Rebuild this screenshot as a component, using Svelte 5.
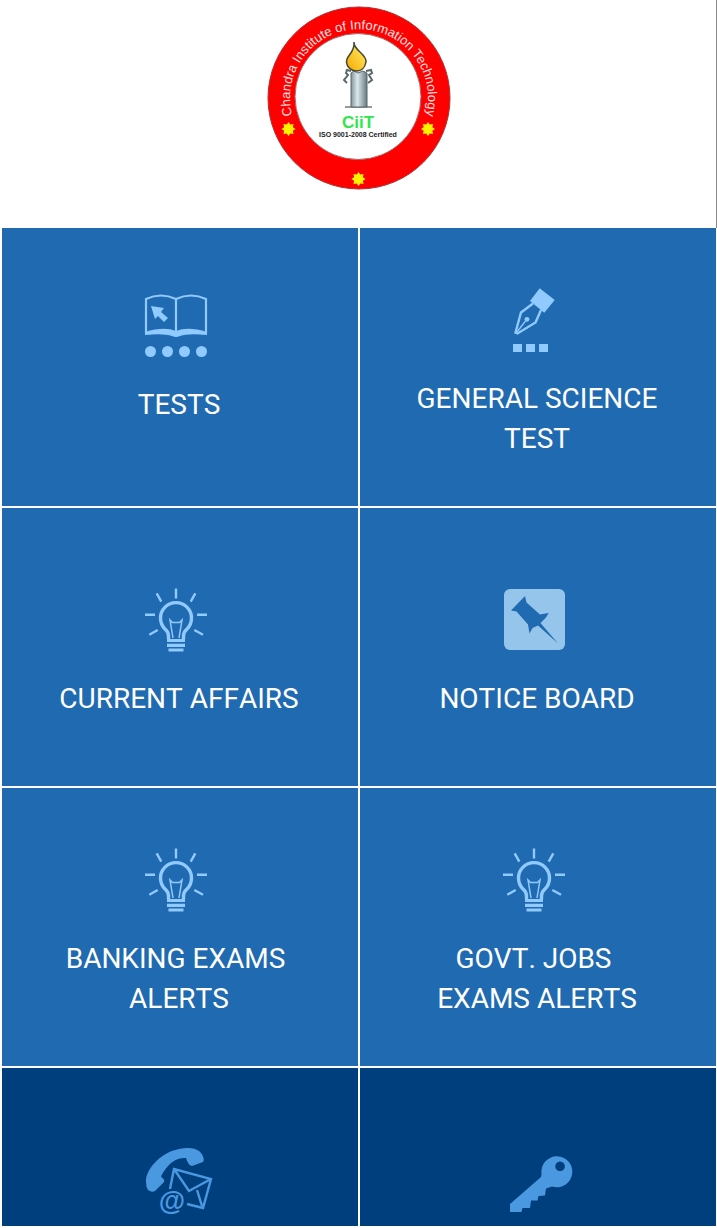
<script>
  const tiles = [
    { icon: "book", lines: ["TESTS"], raised: true },
    { icon: "pen", lines: ["GENERAL SCIENCE", "TEST"] },
    { icon: "bulb", lines: ["CURRENT AFFAIRS"] },
    { icon: "pin", lines: ["NOTICE BOARD"] },
    { icon: "bulb", lines: ["BANKING EXAMS\u00a0", "ALERTS"] },
    { icon: "bulb", lines: ["GOVT. JOBS\u00a0", "EXAMS ALERTS"] },
    { icon: "contact", label: "Contact", lines: [], dark: true },
    { icon: "key", label: "Login", lines: [], dark: true }
  ];

  const star =
    "M0-7 1.8-4.4 5-5 4.4-1.8 7 0 4.4 1.8 5 5 1.8 4.4 0 7-1.8 4.4-5 5-4.4 1.8-7 0-4.4-1.8-5-5-1.8-4.4Z";
</script>

<div class="page">
  <header class="header">
    <svg class="logo" viewBox="0 0 184 184" role="img" aria-label="CiiT">
      <defs>
        <path id="ring" d="M34.4 131.6A69 69 0 1 1 147.6 131.6" />
        <linearGradient id="wax">
          <stop offset="0" stop-color="#82949b" />
          <stop offset="0.4" stop-color="#dbe9ec" />
          <stop offset="1" stop-color="#687980" />
        </linearGradient>
        <linearGradient id="flame" x1="1" y1="0" x2="0" y2="1">
          <stop offset="0" stop-color="#fff36b" />
          <stop offset="1" stop-color="#f5a900" />
        </linearGradient>
      </defs>
      <circle cx="91" cy="92" r="91" fill="#fe0000" stroke="#a33" />
      <circle cx="90" cy="90.5" r="63" fill="#fff" stroke="#a66" />
      <text class="ring-text"><textPath href="#ring" startOffset="50%">Chandra Institute of Information Technology</textPath></text>
      <g fill="#fff200">
        <path d={star} transform="translate(20.5 123)" />
        <path d={star} transform="translate(160 123)" />
        <path d={star} transform="translate(90.5 173)" />
      </g>
      <path d="M77 101h27" stroke="#777" stroke-width="1.5" />
      <path d="M83 67v34h16V67l-4-2-5 2-4-2Z" fill="url(#wax)" stroke="#59676d" />
      <path d="M83 65l-4-1-1 3 2 2-4 5 3 3M98 65l5-1 1 3-3 2 3 5-4 3" fill="none" stroke="#59676d" stroke-width="2" />
      <path d="M86 36c-1 8 13 12 12 20-1 6-5 9-9 9-7 0-12-6-10-12 2-5 8-8 7-17Z" fill="url(#flame)" stroke="#464632" stroke-width="1.5" />
      <text class="brand" x="90" y="122">CiiT</text>
      <text class="iso" x="90" y="131">ISO 9001-2008 Certified</text>
    </svg>
  </header>

  <nav class="grid">
    {#each tiles as tile}
      <a
        class="tile"
        class:raised={tile.raised}
        class:dark={tile.dark}
        href="#{tile.icon}"
        aria-label={tile.label}
      >
        <svg class="icon" viewBox="0 0 64 64" aria-hidden="true">
          {#if tile.icon === "book"}
            <path d="M2 39V5Q17-2 32 5Q47-2 62 5V39M32 5V39" fill="none" stroke="currentColor" stroke-width="2.2" />
            <path d="M1 38Q20 32 32 37Q44 32 63 38V41Q44 39 36 42Q32 44 28 42Q20 39 1 41Z" />
            <path d="M7 12L20 14 17 18 24 24 20 28 14 22 11 25Z" />
            <circle cx="6.5" cy="57.5" r="5.5" />
            <circle cx="23.5" cy="57.5" r="5.5" />
            <circle cx="40.5" cy="57.5" r="5.5" />
            <circle cx="57.5" cy="57.5" r="5.5" />
          {:else if tile.icon === "pen"}
            <path d="M37.7 0.3L52.7 12 42.3 24.7 28 13Z" />
            <path d="M31 15.5L19 24.5 13.5 44.5 15.5 45.5 33.5 34.5 39 22" fill="none" stroke="currentColor" stroke-width="2.4" />
            <path d="M15 44L25 31" stroke="currentColor" stroke-width="1.3" />
            <circle cx="25" cy="31.3" r="2.4" />
            <path d="M11 56h9v8h-9zM24 56h9v8h-9zM37 56h9v8h-9z" />
          {:else if tile.icon === "bulb"}
            <g fill="none" stroke="currentColor" stroke-width="2.4">
              <path d="M32 0.5V10.5M12.7 5.3L17.3 13.7M51.3 5.3L46.7 13.7M1 26.7H11M53 26.7H63M5.3 46.7L13.7 42M50.3 42L59 46.7" />
              <path d="M24.5 51V48Q24.5 44 21 41A15.5 15.5 0 1 1 43 41Q39.5 44 39.5 48V51" stroke-width="3.4" />
              <path d="M29 50L26 32 28.5 34.5H35.5L38 32 35 50" stroke-width="1.5" />
              <path d="M23 52.5H41M23 57.3H41M24.5 62H39.5" stroke-width="3.2" />
            </g>
          {:else if tile.icon === "pin"}
            <rect class="board" x="2" y="1" width="61" height="61" rx="6" />
            <path
              class="pin"
              d="M23 8L24.5 14.5 38 26.5 46.7 25 44 29.5 38.5 35 56 55.5 36 37.5 30.5 40 27.5 45.5 26 36.5 14.5 23.5 9 22.5Z"
            />
          {:else if tile.icon === "contact"}
            <path
              d="M2 34C1 23 15 5 35 1Q48-2 55 3C59 6 61 12 59 14L48 18Q44 17 42 10Q32 9 24 18Q18 25 17 29Q21 31 20 34L11 43Q8 45 4 42Q2 39 2 34Z"
            />
            <path d="M26 41L30 21 67 31 59 60 43 56M30 21L45 43 67 31M53 42L58 58" fill="none" stroke="currentColor" stroke-width="2.4" />
            <text class="at" x="28" y="62">@</text>
          {:else}
            <path
              fill-rule="evenodd"
              d="M39.5 26A15.5 15.5 0 1 1 50 38.5L44 40.5 43 47.5 36.5 48 35.5 52.5 29 52.5 28 60 20.5 60 19.5 64H8V56L39 29ZM58 13.5a4.8 4.8 0 1 0 .1 0Z"
            />
          {/if}
        </svg>
        {#if tile.lines.length}
          <span class="label">
            {#each tile.lines as line}
              <span class="line">{line}</span>
            {/each}
          </span>
        {/if}
      </a>
    {/each}
  </nav>
</div>

<style>
  :global(body) {
    margin: 0;
    background: #fff;
  }

  .page {
    font-family: Roboto, "Liberation Sans", sans-serif;
  }

  .header {
    display: flex;
    justify-content: center;
    box-sizing: border-box;
    height: 228px;
    padding: 6px 0 0 4px;
    border-right: 1px solid #8a8a8a;
  }

  .logo {
    width: 184px;
    height: 184px;
    overflow: visible;
  }

  .ring-text {
    font-family: "Liberation Sans", Arial, sans-serif;
    font-size: 13px;
    fill: #ffe0e0;
    text-anchor: middle;
  }

  .brand {
    font-family: "Liberation Sans", Arial, sans-serif;
    font-size: 17px;
    font-weight: bold;
    fill: #2fe64d;
    text-anchor: middle;
  }

  .iso {
    font-family: "Liberation Sans", Arial, sans-serif;
    font-size: 7px;
    font-weight: bold;
    fill: #222;
    text-anchor: middle;
  }

  .grid {
    display: grid;
    grid-template-columns: repeat(2, 1fr);
    gap: 2px;
    padding: 0 1px 2px 2px;
  }

  .tile {
    display: flex;
    flex-direction: column;
    align-items: center;
    justify-content: center;
    gap: 27px;
    box-sizing: border-box;
    height: 278px;
    padding: 13px 2px 0 0;
    background: #206ab1;
    color: #90caff;
    text-decoration: none;
  }

  .raised {
    padding-bottom: 28px;
  }

  .dark {
    justify-content: flex-start;
    height: 158px;
    padding-top: 80px;
    background: #003f7d;
    color: #4a98df;
  }

  .icon {
    flex: none;
    width: 64px;
    height: 64px;
    margin-right: 6px;
    overflow: visible;
    fill: currentColor;
  }

  .board {
    fill: #95c5ea;
  }

  .pin {
    fill: #206ab1;
  }

  .at {
    font-family: "Liberation Sans", Arial, sans-serif;
    font-size: 27px;
    font-weight: bold;
    text-anchor: middle;
    stroke: #003f7d;
    stroke-width: 4px;
    paint-order: stroke;
  }

  .label {
    color: #fff;
    font-size: 28px;
    font-kerning: none;
    line-height: 40px;
    text-align: center;
  }

  .line {
    display: block;
  }
</style>
